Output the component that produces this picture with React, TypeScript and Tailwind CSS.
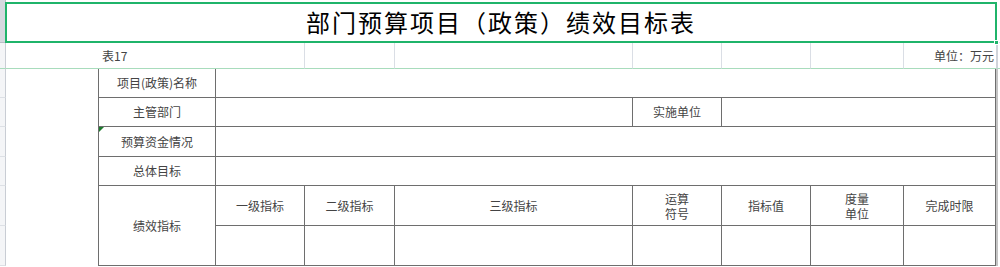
const grid = "border-[#dadee5]";
const dark = "border-[#6e6e6e]";

function Cell({
  className = "",
  children,
}: {
  className?: string;
  children?: React.ReactNode;
}) {
  return (
    <div className={`flex items-center justify-center text-center ${className}`}>
      {children}
    </div>
  );
}

export default function App() {
  return (
    <div className="h-[267px] w-[1000px] overflow-hidden bg-white font-['Noto_Sans_CJK_SC',sans-serif] text-[12px] text-[#444]">
      <div className="grid grid-cols-[6px_93px_117px_89px_90px_238px_89px_89px_93px_92px_4px] grid-rows-[43px_26px_29px_29px_30px_29px_40px_40px]">
        {/* row headers */}
        <div className="col-start-1 row-start-1 border-r border-b border-[#b9bec7] bg-[#d5d9df]" />
        <div className="col-start-1 row-start-2 border-r border-b border-r-[#c9cdd4] border-b-[#a8dcbc] bg-[#f4f5f7]" />
        <div className="col-start-1 row-start-3 border-r border-b border-r-[#c9cdd4] border-b-[#dde0e5] bg-[#f4f5f7]" />
        <div className="col-start-1 row-start-4 border-r border-b border-r-[#c9cdd4] border-b-[#dde0e5] bg-[#f4f5f7]" />
        <div className="col-start-1 row-start-5 border-r border-b border-r-[#c9cdd4] border-b-[#dde0e5] bg-[#f4f5f7]" />
        <div className="col-start-1 row-start-6 border-r border-b border-r-[#c9cdd4] border-b-[#dde0e5] bg-[#f4f5f7]" />
        <div className="col-start-1 row-start-7 border-r border-b border-r-[#c9cdd4] border-b-[#dde0e5] bg-[#f4f5f7]" />
        <div className="col-start-1 row-start-8 border-r border-b border-r-[#c9cdd4] border-b-[#dde0e5] bg-[#f4f5f7]" />

        {/* title row */}
        <Cell className="relative col-start-2 col-span-9 row-start-1">
          <span className="text-[24px] font-normal tracking-[2px] text-[#000]">
            部门预算项目（政策）绩效目标表
          </span>
          <div className="absolute -left-px top-[2px] -right-px bottom-0 border-2 border-[#1fb46a]">
            <div className="absolute -right-[4px] -bottom-[4px] h-[5px] w-[5px] border border-white bg-[#1fb46a]" />
          </div>
        </Cell>
        <div className={`col-start-11 row-start-1 border-b ${grid}`} />

        {/* 表17 row */}
        <div className="col-start-2 row-start-2 border-b border-[#a8dcbc]" />
        <div className={`col-start-3 col-span-2 row-start-2 flex items-center border-r border-b ${grid} border-b-[#a8dcbc] pl-[3px]`}>
          表17
        </div>
        <div className={`col-start-5 row-start-2 border-r border-b ${grid} border-b-[#a8dcbc]`} />
        <div className={`col-start-6 row-start-2 border-r border-b ${grid} border-b-[#a8dcbc]`} />
        <div className={`col-start-7 row-start-2 border-r border-b ${grid} border-b-[#a8dcbc]`} />
        <div className={`col-start-8 row-start-2 border-r border-b ${grid} border-b-[#a8dcbc]`} />
        <div className={`col-start-9 row-start-2 border-r border-b ${grid} border-b-[#a8dcbc]`} />
        <div className="col-start-10 row-start-2 flex items-center justify-end border-b border-[#a8dcbc] pr-[2px]">
          单位：万元
        </div>
        <div className="col-start-11 row-start-2 border-l-2 border-b border-l-[#d0d4da] border-b-[#a8dcbc]" />

        {/* table */}
        <div className={`col-start-2 row-start-3 row-span-6 border-r ${dark}`} />

        <Cell className={`col-start-3 row-start-3 border-r border-b ${dark}`}>项目(政策)名称</Cell>
        <div className={`col-start-4 col-span-7 row-start-3 border-r border-b ${dark}`} />

        <Cell className={`col-start-3 row-start-4 border-r border-b ${dark}`}>主管部门</Cell>
        <div className={`col-start-4 col-span-3 row-start-4 border-r border-b ${dark}`} />
        <Cell className={`col-start-7 row-start-4 border-r border-b ${dark}`}>实施单位</Cell>
        <div className={`col-start-8 col-span-3 row-start-4 border-r border-b ${dark}`} />

        <Cell className={`relative col-start-3 row-start-5 border-r border-b ${dark}`}>
          <span className="absolute left-0 top-0 h-0 w-0 border-t-[5px] border-r-[5px] border-t-[#1d7a2e] border-r-transparent" />
          预算资金情况
        </Cell>
        <div className={`col-start-4 col-span-7 row-start-5 border-r border-b ${dark}`} />

        <Cell className={`col-start-3 row-start-6 border-r border-b ${dark}`}>总体目标</Cell>
        <div className={`col-start-4 col-span-7 row-start-6 border-r border-b ${dark}`} />

        <Cell className={`col-start-3 row-start-7 row-span-2 border-r border-b ${dark}`}>绩效指标</Cell>
        <Cell className={`col-start-4 row-start-7 border-r border-b ${dark}`}>一级指标</Cell>
        <Cell className={`col-start-5 row-start-7 border-r border-b ${dark}`}>二级指标</Cell>
        <Cell className={`col-start-6 row-start-7 border-r border-b ${dark}`}>三级指标</Cell>
        <Cell className={`col-start-7 row-start-7 flex-col border-r border-b ${dark} leading-[15px]`}>
          <span>运算</span>
          <span>符号</span>
        </Cell>
        <Cell className={`col-start-8 row-start-7 border-r border-b ${dark}`}>指标值</Cell>
        <Cell className={`col-start-9 row-start-7 flex-col border-r border-b ${dark} leading-[15px]`}>
          <span>度量</span>
          <span>单位</span>
        </Cell>
        <Cell className={`col-start-10 row-start-7 border-r border-b ${dark}`}>完成时限</Cell>

        <div className={`col-start-4 row-start-8 border-r border-b ${dark}`} />
        <div className={`col-start-5 row-start-8 border-r border-b ${dark}`} />
        <div className={`col-start-6 row-start-8 border-r border-b ${dark}`} />
        <div className={`col-start-7 row-start-8 border-r border-b ${dark}`} />
        <div className={`col-start-8 row-start-8 border-r border-b ${dark}`} />
        <div className={`col-start-9 row-start-8 border-r border-b ${dark}`} />
        <div className={`col-start-10 row-start-8 border-r border-b ${dark}`} />

        <div className="col-start-11 row-start-3 row-span-6 border-l-2 border-[#c4c4c4]" />
      </div>
    </div>
  );
}
